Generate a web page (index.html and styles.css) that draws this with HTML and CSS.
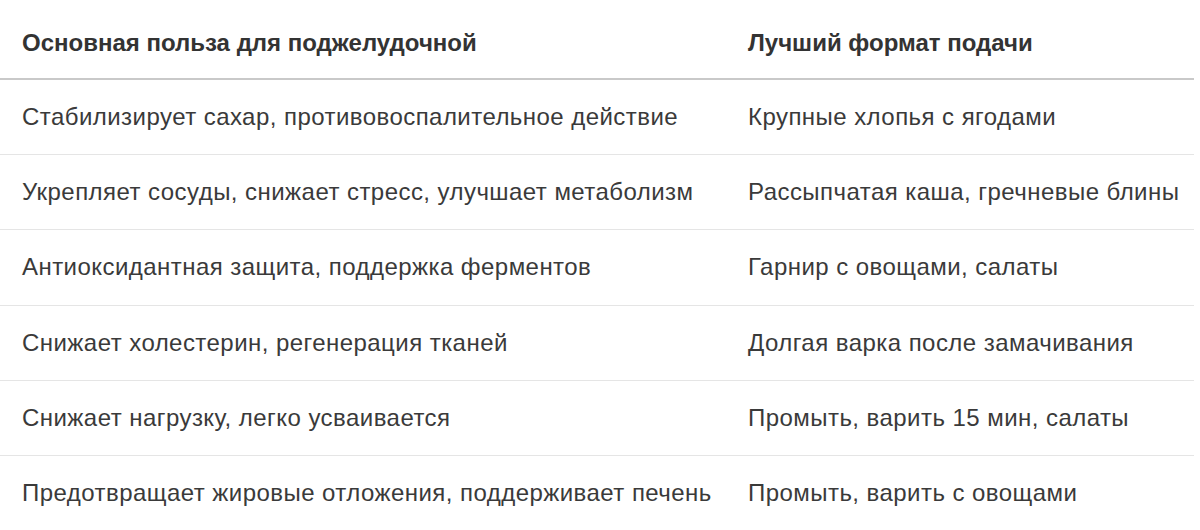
FILE: index.html
```html
<!DOCTYPE html>
<html lang="ru">
<head>
<meta charset="utf-8">
<link rel="stylesheet" href="styles.css">
</head>
<body>
<table class="tbl">
  <thead>
    <tr>
      <th class="c1">Основная польза для поджелудочной</th>
      <th class="c2">Лучший формат подачи</th>
    </tr>
  </thead>
  <tbody>
    <tr><td>Стабилизирует сахар, противовоспалительное действие</td><td>Крупные хлопья с ягодами</td></tr>
    <tr><td>Укрепляет сосуды, снижает стресс, улучшает метаболизм</td><td>Рассыпчатая каша, гречневые блины</td></tr>
    <tr><td>Антиоксидантная защита, поддержка ферментов</td><td>Гарнир с овощами, салаты</td></tr>
    <tr><td>Снижает холестерин, регенерация тканей</td><td>Долгая варка после замачивания</td></tr>
    <tr><td>Снижает нагрузку, легко усваивается</td><td>Промыть, варить 15 мин, салаты</td></tr>
    <tr><td>Предотвращает жировые отложения, поддерживает печень</td><td>Промыть, варить с овощами</td></tr>
  </tbody>
</table>
</body>
</html>
```
FILE: styles.css
```css
html, body {
  margin: 0;
  padding: 0;
  background: #ffffff;
}
body {
  font-family: "Liberation Sans", Arial, sans-serif;
  font-size: 24px;
  color: #3a3a3a;
}
.tbl {
  width: 1194px;
  border-collapse: collapse;
  table-layout: fixed;
}
.tbl th {
  text-align: left;
  font-weight: bold;
  color: #333333;
  line-height: 28px;
  padding: 29px 0 21px 22px;
  border-bottom: 2px solid #c9c9c9;
}
.tbl th.c1 {
  width: 704px;
}
.tbl td {
  line-height: 28px;
  padding: 23.1px 0 23.1px 22px;
  border-bottom: 1px solid #e5e5e5;
  white-space: nowrap;
  letter-spacing: 0.45px;
}
```
